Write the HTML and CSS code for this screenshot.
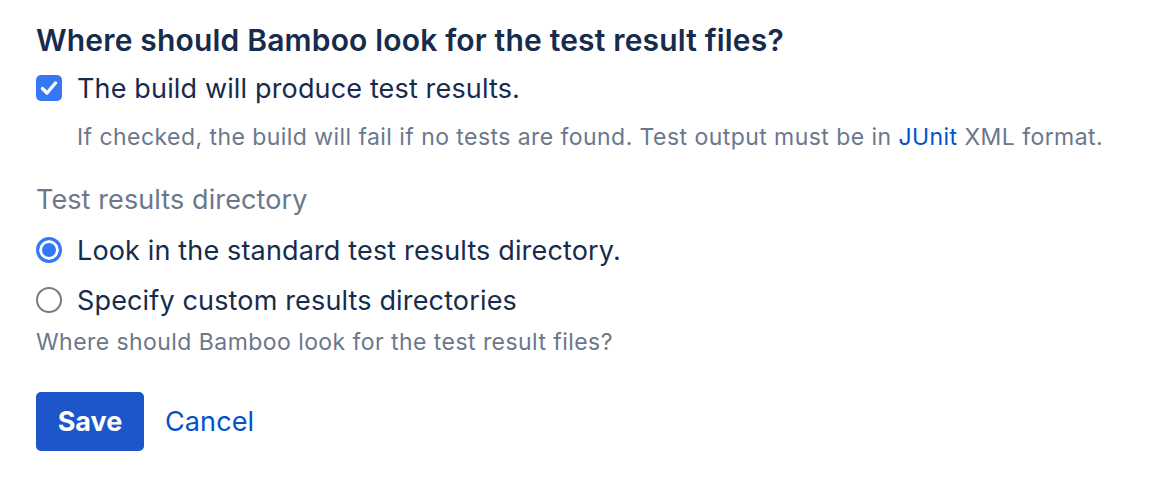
FILE: index.html
```html
<!DOCTYPE html>
<html lang="en">
<head>
<meta charset="utf-8">
<title>Test results</title>
<link rel="stylesheet" href="styles.css">
</head>
<body>
<div class="page">
  <h2 class="title">Where should Bamboo look for the test result files?</h2>
  <label class="row check-row">
    <span class="checkbox"><svg viewBox="0 0 26 26" width="26" height="26"><path d="M6.5 13.5 L11 18 L19.5 8" fill="none" stroke="#fff" stroke-width="3.4" stroke-linecap="round" stroke-linejoin="round"/></svg></span>
    <span class="row-text">The build will produce test results.</span>
  </label>
  <p class="help indent">If checked, the build will fail if no tests are found. Test output must be in <a class="link" href="#">JUnit</a> XML format.</p>
  <div class="field-label">Test results directory</div>
  <label class="row radio-row first">
    <span class="radio checked"></span>
    <span class="row-text">Look in the standard test results directory.</span>
  </label>
  <label class="row radio-row">
    <span class="radio"></span>
    <span class="row-text">Specify custom results directories</span>
  </label>
  <p class="help help-below">Where should Bamboo look for the test result files?</p>
  <div class="actions">
    <button class="btn-primary" type="button">Save</button>
    <a class="btn-link" href="#">Cancel</a>
  </div>
</div>
</body>
</html>
```

FILE: styles.css
```css
html, body {
  margin: 0;
  padding: 0;
  background: #ffffff;
}
body {
  font-family: Inter, "Noto Sans", "Liberation Sans", sans-serif;
  color: #172b4d;
}
.page {
  padding: 20px 0 0 36px;
}
.title {
  margin: 0;
  font-size: 30px;
  font-weight: 600;
  letter-spacing: 0.18px;
  line-height: 40px;
  color: #172b4d;
}
.row {
  display: flex;
  align-items: center;
  gap: 15px;
  height: 48px;
}
.check-row {
  margin-top: 4px;
}
.row-text {
  font-size: 27px;
  letter-spacing: 0.15px;
  color: #172b4d;
}
.checkbox {
  width: 26px;
  height: 26px;
  border-radius: 5px;
  background: #3478f6;
  display: flex;
  align-items: center;
  justify-content: center;
  flex: none;
}
.checkbox svg {
  display: block;
}
.help {
  margin: 0;
  font-size: 23px;
  letter-spacing: 0.44px;
  line-height: 30px;
  color: #6b778c;
}
.indent {
  margin-top: 10px;
  padding-left: 41px;
}
.link {
  color: #0052cc;
  text-decoration: none;
}
.field-label {
  margin-top: 30px;
  font-size: 27px;
  letter-spacing: 0.1px;
  line-height: 36px;
  color: #6b778c;
}
.radio-row.first {
  margin-top: 8px;
}
.radio-row {
  margin-top: 2px;
}
.radio {
  width: 26px;
  height: 26px;
  box-sizing: border-box;
  border-radius: 50%;
  border: 2px solid #7a7a7a;
  background: #fff;
  flex: none;
}
.radio.checked {
  border: 3px solid #3478f6;
  background: #3478f6;
  box-shadow: inset 0 0 0 3px #ffffff;
}
.help-below {
  margin-top: 3px;
}
.actions {
  margin-top: 35px;
  display: flex;
  align-items: center;
  gap: 21px;
}
.btn-primary {
  width: 108px;
  height: 59px;
  border: none;
  border-radius: 5px;
  background: #1d56c8;
  color: #ffffff;
  font-family: inherit;
  font-size: 27px;
  font-weight: 700;
  cursor: pointer;
}
.btn-link {
  font-size: 27px;
  letter-spacing: 0.1px;
  color: #0052cc;
  text-decoration: none;
}
```
